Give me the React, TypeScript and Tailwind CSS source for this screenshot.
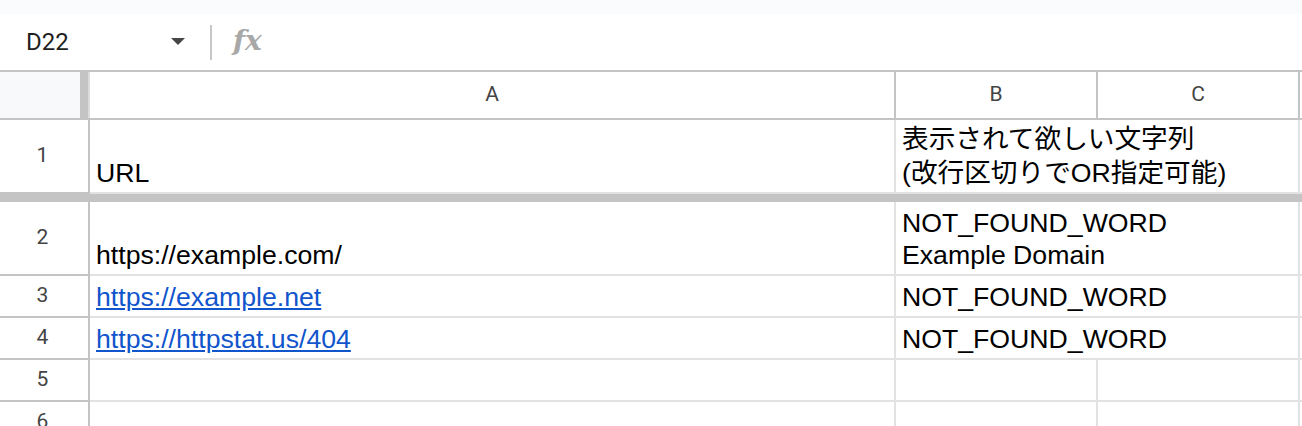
import React from "react";

const CELL_FONT = { fontFamily: '"Liberation Sans", "Noto Sans CJK JP", Arial, sans-serif' };
const HEAD_FONT = { fontFamily: 'Roboto, "Liberation Sans", Arial, sans-serif' };

function RowHead({ n }: { n: number }) {
  return (
    <div
      className="w-[90px] shrink-0 border-r-2 border-b-2 border-[#c4c4c4] flex items-center justify-center pr-[3px] text-[21px] text-[#444]"
      style={HEAD_FONT}
    >
      {n}
    </div>
  );
}

export default function App() {
  return (
    <div className="w-[1302px] h-[426px] overflow-hidden bg-white relative">
      {/* top strip */}
      <div className="h-[14px] bg-[#f9fbfd]" />

      {/* formula bar */}
      <div className="h-[58px] border-b-2 border-[#c4c4c4] flex items-center">
        <div className="w-[160px] pl-[26px] text-[24px] text-[#1f1f1f]" style={HEAD_FONT}>
          D22
        </div>
        <div className="ml-[10px] w-[16px] h-[8px] flex items-center">
          <svg width="16" height="8" viewBox="0 0 16 8">
            <polygon points="1,0 15,0 8,7" fill="#444746" />
          </svg>
        </div>
        <div className="ml-[24px] w-[2px] h-[35px] bg-[#c7c7c7]" />
        <div
          className="ml-[21px] text-[28px] italic font-bold text-[#a8a8a8] leading-none -mt-[2px]"
          style={{ fontFamily: '"DejaVu Serif", "Liberation Serif", serif' }}
        >
          fx
        </div>
      </div>

      {/* column header */}
      <div className="flex h-[48px] border-b-2 border-[#c4c4c4] text-[21px] text-[#444]" style={HEAD_FONT}>
        <div className="w-[90px] shrink-0 flex">
          <div className="w-[80px] bg-[#f8f9fa]" />
          <div className="w-[8px] bg-[#c4c4c4]" />
          <div className="w-[2px] bg-[#dcdcdc]" />
        </div>
        <div className="w-[806px] shrink-0 border-r-2 border-[#c4c4c4] flex items-center justify-center">A</div>
        <div className="w-[202px] shrink-0 border-r-2 border-[#c4c4c4] flex items-center justify-center">B</div>
        <div className="w-[202px] shrink-0 border-r-2 border-[#c4c4c4] flex items-center justify-center">C</div>
        <div className="flex-1" />
      </div>

      {/* grid */}
      <div className="text-[26.67px] text-black" style={CELL_FONT}>
        {/* row 1 */}
        <div className="flex h-[74px]">
          <RowHead n={1} />
          <div className="w-[806px] shrink-0 border-r-2 border-b-2 border-[#e2e2e2] flex items-end pl-[6px] pb-[3px] leading-[32px]">
            URL
          </div>
          <div className="w-[404px] shrink-0 border-r-2 border-b-2 border-[#e2e2e2] flex flex-col justify-end pl-[6px] pb-[2px] leading-[34px] whitespace-nowrap">
            <div>表示されて欲しい文字列</div>
            <div>(改行区切りでOR指定可能)</div>
          </div>
          <div className="flex-1 border-b-2 border-[#e2e2e2]" />
        </div>
        {/* frozen divider */}
        <div className="h-[8px] bg-[#c4c4c4]" />

        {/* row 2 */}
        <div className="flex h-[74px]">
          <RowHead n={2} />
          <div className="w-[806px] shrink-0 border-r-2 border-b-2 border-[#e2e2e2] flex items-end pl-[6px] pb-[3px] leading-[32px]">
            https://example.com/
          </div>
          <div className="w-[404px] shrink-0 border-r-2 border-b-2 border-[#e2e2e2] flex flex-col justify-end pl-[6px] pb-[3px] leading-[32px] whitespace-nowrap">
            <div>NOT_FOUND_WORD</div>
            <div>Example Domain</div>
          </div>
          <div className="flex-1 border-b-2 border-[#e2e2e2]" />
        </div>

        {/* row 3 */}
        <div className="flex h-[42px]">
          <RowHead n={3} />
          <div className="w-[806px] shrink-0 border-r-2 border-b-2 border-[#e2e2e2] flex items-end pl-[6px] pb-[3px] leading-[32px]">
            <span className="text-[#1155cc] underline">https://example.net</span>
          </div>
          <div className="w-[404px] shrink-0 border-r-2 border-b-2 border-[#e2e2e2] flex items-end pl-[6px] pb-[3px] leading-[32px] whitespace-nowrap">
            NOT_FOUND_WORD
          </div>
          <div className="flex-1 border-b-2 border-[#e2e2e2]" />
        </div>

        {/* row 4 */}
        <div className="flex h-[42px]">
          <RowHead n={4} />
          <div className="w-[806px] shrink-0 border-r-2 border-b-2 border-[#e2e2e2] flex items-end pl-[6px] pb-[3px] leading-[32px]">
            <span className="text-[#1155cc] underline">https://httpstat.us/404</span>
          </div>
          <div className="w-[404px] shrink-0 border-r-2 border-b-2 border-[#e2e2e2] flex items-end pl-[6px] pb-[3px] leading-[32px] whitespace-nowrap">
            NOT_FOUND_WORD
          </div>
          <div className="flex-1 border-b-2 border-[#e2e2e2]" />
        </div>

        {/* row 5 */}
        <div className="flex h-[42px]">
          <RowHead n={5} />
          <div className="w-[806px] shrink-0 border-r-2 border-b-2 border-[#e2e2e2]" />
          <div className="w-[202px] shrink-0 border-r-2 border-b-2 border-[#e2e2e2]" />
          <div className="w-[202px] shrink-0 border-r-2 border-b-2 border-[#e2e2e2]" />
          <div className="flex-1 border-b-2 border-[#e2e2e2]" />
        </div>

        {/* row 6 */}
        <div className="flex h-[42px]">
          <RowHead n={6} />
          <div className="w-[806px] shrink-0 border-r-2 border-b-2 border-[#e2e2e2]" />
          <div className="w-[202px] shrink-0 border-r-2 border-b-2 border-[#e2e2e2]" />
          <div className="w-[202px] shrink-0 border-r-2 border-b-2 border-[#e2e2e2]" />
          <div className="flex-1 border-b-2 border-[#e2e2e2]" />
        </div>
      </div>
    </div>
  );
}
